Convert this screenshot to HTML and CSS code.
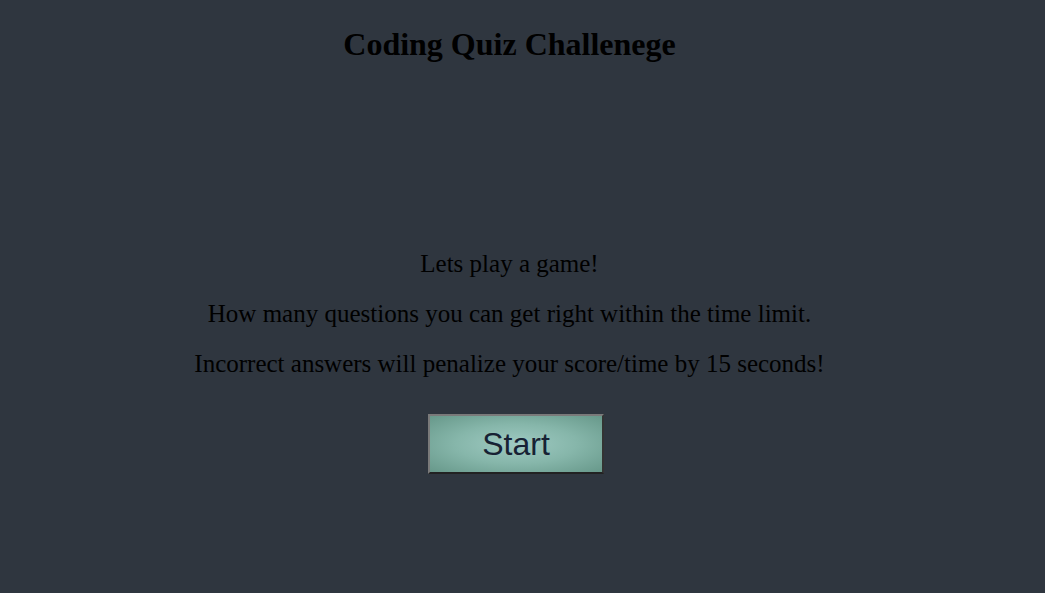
FILE: index.html
```html
<!DOCTYPE html>
<html>
<head>
<meta charset="utf-8">
<link rel="stylesheet" href="styles.css">
</head>
<body>
<header class="header">
  <h1 class="title">Coding Quiz Challenege</h1>
</header>
<main class="intro">
  <p class="line">Lets play a game!</p>
  <p class="line">How many questions you can get right within the time limit.</p>
  <p class="line">Incorrect answers will penalize your score/time by 15 seconds!</p>
  <div class="actions">
    <button class="start">Start</button>
  </div>
</main>
</body>
</html>
```
FILE: styles.css
```css
html, body {
  margin: 0;
  padding: 0;
  background: #2f363f;
  height: 100%;
}
body {
  font-family: "Liberation Serif", "Times New Roman", serif;
  color: #000;
  padding-right: 26px;
}
.header {
  text-align: center;
  padding-top: 26px;
}
.title {
  margin: 0;
  font-size: 32px;
  font-weight: bold;
  line-height: 37px;
}
.intro {
  text-align: center;
  margin-top: 187px;
}
.line {
  font-size: 25px;
  margin: 0 0 22px;
  line-height: 28px;
}
.actions {
  padding-top: 14px;
  padding-left: 13px;
}
.start {
  width: 176px;
  height: 60px;
  font-family: "Liberation Sans", Arial, sans-serif;
  font-size: 32px;
  color: #172234;
  background: radial-gradient(ellipse at center, #9fcac2 0%, #86b6aa 50%, #67988a 100%);
  border: 2px solid;
  border-color: #7a7a7a #333 #222 #7a7a7a;
  padding: 0;
}
```
